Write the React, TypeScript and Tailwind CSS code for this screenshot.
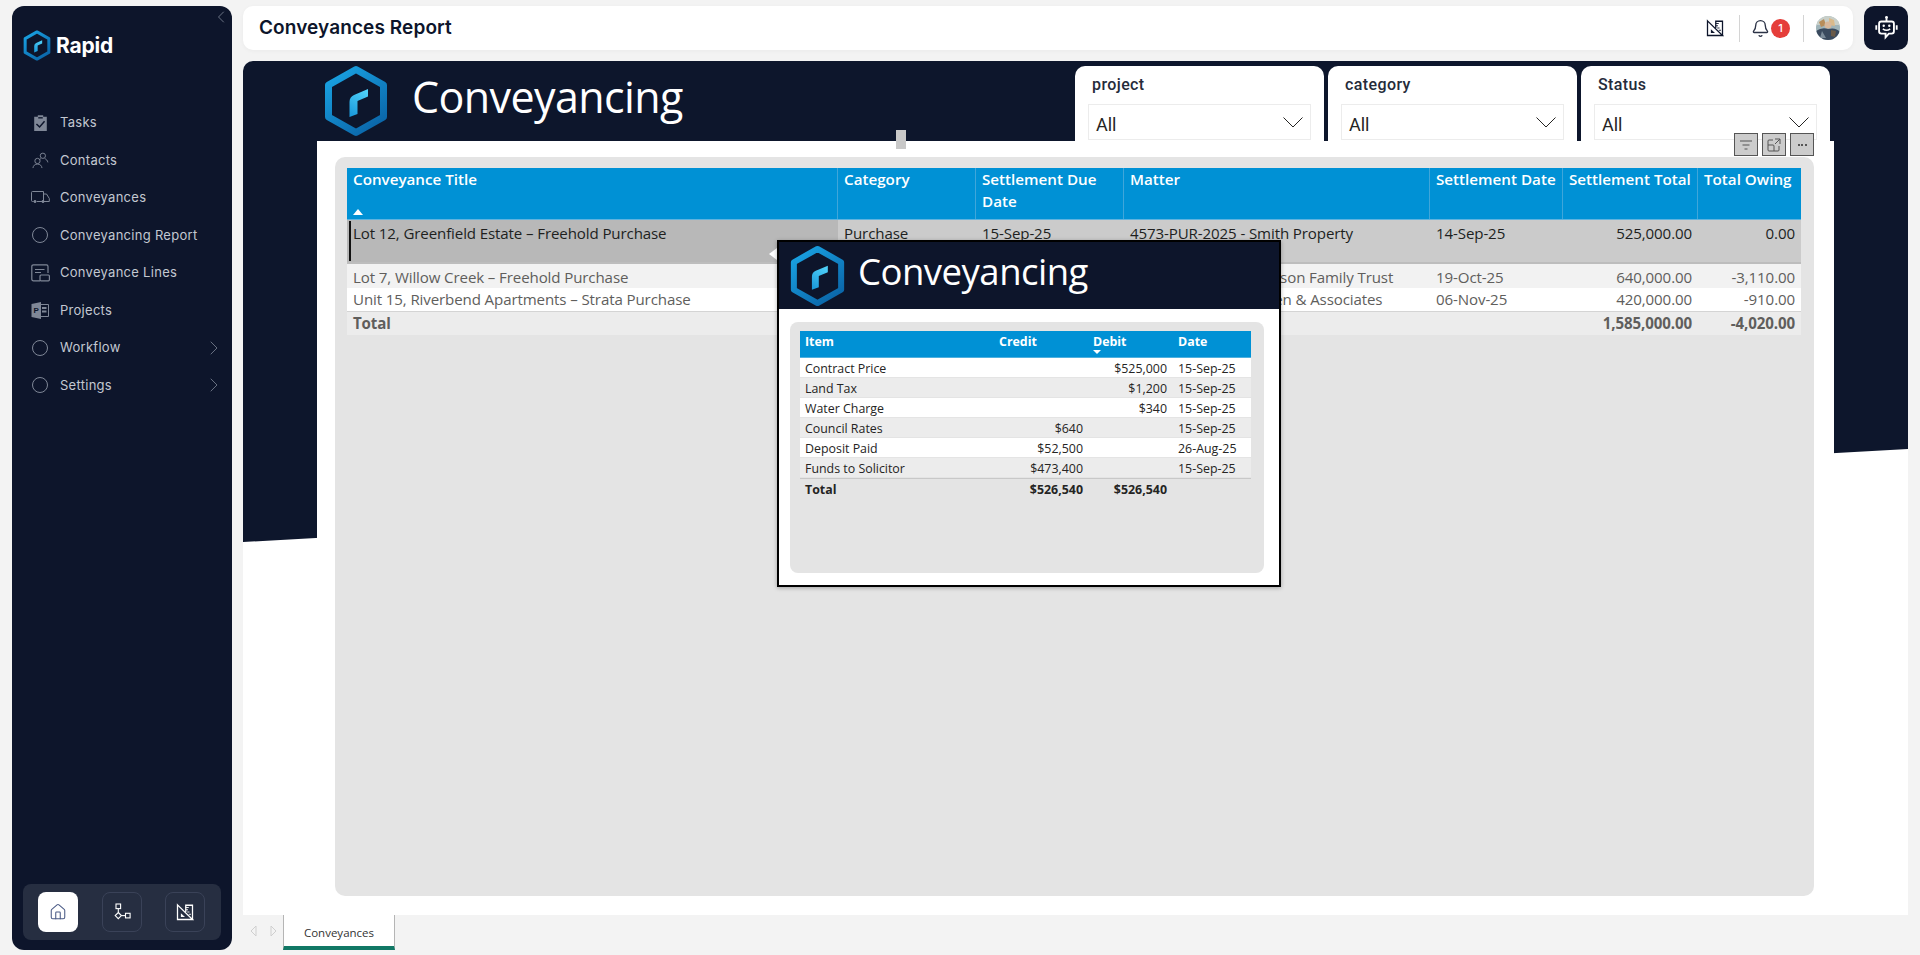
import React from "react";
import { Home, Bell, ChevronLeft, ChevronRight } from "lucide-react";

function Hex({ id, className }: { id: string; className: string }) {
  return (
    <svg viewBox="0 0 64 72" className={className}>
      <defs>
        <linearGradient id={id + "a"} x1="0" y1="0" x2="0.7" y2="1">
          <stop offset="0" stopColor="#1aa6e6" />
          <stop offset="1" stopColor="#0b68ab" />
        </linearGradient>
        <linearGradient id={id + "b"} x1="0.7" y1="0" x2="0.3" y2="1">
          <stop offset="0" stopColor="#4fd0f8" />
          <stop offset="1" stopColor="#1c9bdc" />
        </linearGradient>
      </defs>
      <polygon points="32,4.5 59.5,20 59.5,52 32,67.5 4.5,52 4.5,20" fill="none" stroke={`url(#${id}a)`} strokeWidth="7" strokeLinejoin="round" />
      <path d="M25.5 52 L25.5 37 Q25.5 32 30 30 L44 24 L44 31.5 L33.5 36 L33.5 49 Z" fill={`url(#${id}b)`} />
    </svg>
  );
}

function RulerIcon({ color, size }: { color: string; size: number }) {
  return (
    <svg viewBox="0 0 24 24" width={size} height={size} fill="none" stroke={color} strokeWidth="1.7">
      <path d="M2 2.5 L22 22 H2 Z" />
      <path d="M6.5 13.5 L12 18.8 H6.5 Z" fill={color} stroke="none" />
      <path d="M13 12 V3 H22 V22" />
      <path d="M13 6 H17 M13 9 H16 M15 12 H18 M17 15 H20" strokeWidth="1.2" />
    </svg>
  );
}

const ic = "#7f8797";
function Tasks() {
  return (
    <svg viewBox="0 0 16 20" width="15" height="18">
      <path d="M1 3 H5 V1.5 H11 V3 H15 V19 H1 Z" fill={ic} />
      <path d="M5.5 3.5 H10.5 V5 H5.5 Z" fill="#0d152b" />
      <path d="M3.5 11 L7 14.5 L12.5 8" fill="none" stroke="#0d152b" strokeWidth="1.6" />
    </svg>
  );
}
function Contacts() {
  return (
    <svg viewBox="0 0 18 18" width="17" height="17" fill="none" stroke={ic} strokeWidth="1">
      <circle cx="11.5" cy="4" r="2.8" />
      <path d="M13.5 7 C15 7.5 16.5 9 16.8 11 M8 8 C8.6 7.5 9 7.2 9.5 7" />
      <circle cx="5.8" cy="9.5" r="2.8" />
      <path d="M1 17 C1.3 14.5 3 12.8 5.8 12.8 C8.6 12.8 10.3 14.5 10.6 17" />
    </svg>
  );
}
function Truck() {
  return (
    <svg viewBox="0 0 19 13" width="19" height="13" fill="none" stroke={ic} strokeWidth="1">
      <path d="M2.5 10.5 H1.5 Q0.5 10.5 0.5 9.5 V1.5 Q0.5 0.5 1.5 0.5 H12.5 V10.5 H6" />
      <path d="M12.5 3 H15.5 L18.3 7.5 V10.5 H12.5" />
      <path d="M8 10.5 H11" />
      <circle cx="4" cy="10.5" r="1.1" fill={ic} />
      <circle cx="12" cy="10.5" r="1.1" fill={ic} />
    </svg>
  );
}
function Ring() {
  return <span className="block h-[16px] w-[16px] rounded-full border border-[#7f8797]" />;
}
function LinesIcon() {
  return (
    <svg viewBox="0 0 19 18" width="19" height="18" fill="none" stroke={ic} strokeWidth="1.2">
      <path d="M9 16.8 H2.5 Q0.8 16.8 0.8 15 V2.5 Q0.8 0.8 2.5 0.8 H15.5 Q17 0.8 17 2.5 V9" />
      <path d="M4 5.5 H13.5 M4 8.5 H10" />
      <rect x="9" y="11" width="9.4" height="5.8" rx="1" />
    </svg>
  );
}
function ProjectIcon() {
  return (
    <svg viewBox="0 0 18 17" width="18" height="17">
      <path d="M7 2.5 H17.5 V14.5 H7 Z" fill="none" stroke={ic} strokeWidth="1" />
      <path d="M11 5 H15.5 V7 H11 Z M11 8.5 H15.5 V10.5 H11 Z" fill={ic} />
      <path d="M0.5 2 L10 0 V17 L0.5 15 Z" fill={ic} />
      <text x="2.6" y="11.4" fontSize="8" fontWeight="700" fill="#0d152b" fontFamily="Liberation Sans">P</text>
    </svg>
  );
}
function Flow() {
  return (
    <svg viewBox="0 0 18 18" width="18" height="18" fill="none" stroke="#ffffff" strokeWidth="1.1">
      <rect x="3" y="1" width="4.6" height="4.6" />
      <path d="M5.3 5.6 V9.5" />
      <path d="M5.3 9.5 L8.4 12.6 L5.3 15.7 L2.2 12.6 Z" />
      <path d="M8.4 12.6 H12.5" />
      <rect x="12.5" y="10.3" width="4.6" height="4.6" />
    </svg>
  );
}
function BotIcon() {
  return (
    <svg viewBox="0 0 24 28" width="23" height="26" fill="none" stroke="#ffffff" strokeWidth="2">
      <circle cx="12" cy="2.5" r="1.5" fill="#ffffff" stroke="none" />
      <path d="M12 3 V7" />
      <path d="M6.5 7 H17.5 Q20 7 20 9.5 V17.5 Q20 20 17.5 20 H14.5 L11 24 V20 H6.5 Q4 20 4 17.5 V9.5 Q4 7 6.5 7 Z" />
      <path d="M1 11 V16 M23 11 V16" />
      <circle cx="9" cy="11.5" r="1.3" fill="#ffffff" stroke="none" />
      <circle cx="15" cy="11.5" r="1.3" fill="#ffffff" stroke="none" />
      <path d="M8 15 Q12 18 16 15" strokeWidth="1.6" />
    </svg>
  );
}
function Avatar() {
  return (
    <svg viewBox="0 0 24 24" width="24" height="24" className="rounded-full">
      <rect width="24" height="24" fill="#9fb3b8" />
      <rect x="0" y="0" width="24" height="9" fill="#c8cfc9" />
      <path d="M3 6 L8 3 L10 9 L5 11 Z" fill="#b78d5a" />
      <path d="M13 2 L18 4 L19 10 L13 9 Z" fill="#d9b98a" />
      <circle cx="12" cy="9" r="3.5" fill="#d8b79a" />
      <path d="M0 24 V15 Q6 11 12 13 Q20 11 24 16 V24 Z" fill="#3a4a5e" />
      <path d="M6 15 L10 22 L4 22 Z" fill="#7a8a98" />
      <path d="M15 14 L20 15 L19 21 L15 20 Z" fill="#6a5a48" />
    </svg>
  );
}

const nav = [
  { label: "Tasks", icon: <Tasks /> },
  { label: "Contacts", icon: <Contacts /> },
  { label: "Conveyances", icon: <Truck /> },
  { label: "Conveyancing Report", icon: <Ring /> },
  { label: "Conveyance Lines", icon: <LinesIcon /> },
  { label: "Projects", icon: <ProjectIcon /> },
  { label: "Workflow", icon: <Ring />, more: true },
  { label: "Settings", icon: <Ring />, more: true },
];

function Sidebar() {
  return (
    <aside className="relative flex h-[944px] w-[220px] shrink-0 flex-col rounded-[12px] bg-[#0d152b] font-['Inter',sans-serif]">
      <ChevronLeft size={20} strokeWidth={0.9} color="#8a92a3" className="absolute right-[1px] top-[1px]" />
      <div className="flex items-center gap-[5px] pl-[11px] pt-[24px]">
        <Hex id="s" className="h-[31px] w-[28px]" />
        <span className="text-[21px] font-bold leading-[30px] tracking-[-0.2px] text-white">Rapid</span>
      </div>
      <nav className="mt-[43px] flex flex-col">
        {nav.map((n) => (
          <div key={n.label} className="flex h-[37.5px] items-center text-[#c3c8d1]">
            <span className="flex w-[48px] items-center justify-center pl-[8px]">{n.icon}</span>
            <span className="text-[13px] tracking-[0.28px]">{n.label}</span>
            {n.more && <ChevronRight size={24} strokeWidth={0.8} color="#7f8797" className="ml-auto mr-[6px]" />}
          </div>
        ))}
      </nav>
      <div className="mx-[11px] mb-[10px] mt-auto flex h-[56px] items-center rounded-[8px] bg-[#262e41] pl-[15px]">
        <span className="flex h-[40px] w-[40px] items-center justify-center rounded-[8px] bg-white">
          <Home size={18} strokeWidth={1.4} color="#4a5a85" />
        </span>
        <span className="ml-[24px] flex h-[40px] w-[40px] items-center justify-center rounded-[8px] border border-[#3a4258]">
          <Flow />
        </span>
        <span className="ml-[23px] flex h-[40px] w-[40px] items-center justify-center rounded-[8px] border border-[#3a4258]">
          <RulerIcon color="#ffffff" size={18} />
        </span>
      </div>
    </aside>
  );
}

function Header() {
  return (
    <div className="flex h-[44px] gap-[11px]">
      <header className="flex h-full w-[1610px] items-center rounded-[10px] bg-white pl-[16px] shadow-[0_1px_4px_rgba(0,0,0,0.04)]">
        <h1 className="font-['Inter',sans-serif] text-[19px] font-semibold tracking-[0.1px] text-[#0d152b]">Conveyances Report</h1>
        <div className="ml-auto flex items-center">
          <RulerIcon color="#0d152b" size={18} />
          <span className="ml-[15px] mr-[11px] h-[27px] w-px bg-[#d4d4d4]" />
          <Bell size={19} strokeWidth={1.7} color="#2b3246" />
          <span className="ml-[1px] flex h-[19px] w-[19px] items-center justify-center rounded-full bg-[#e53e3a] font-['Inter',sans-serif] text-[11px] font-medium text-white">1</span>
          <span className="ml-[13px] mr-[12px] h-[27px] w-px bg-[#d4d4d4]" />
          <span className="mr-[13px]"><Avatar /></span>
        </div>
      </header>
      <div className="flex h-[44px] w-[44px] items-center justify-center rounded-[10px] bg-[#0d152b]">
        <BotIcon />
      </div>
    </div>
  );
}

function Slicer({ label, ml }: { label: string; ml: string }) {
  return (
    <div className={`${ml} mt-[5px] h-[90px] w-[249px] shrink-0 rounded-t-[10px] bg-white px-[13px] pt-[8px] font-['Roboto',sans-serif]`}>
      <div className="pl-[4px] text-[16px] font-medium leading-[22px] tracking-[0.4px] text-[#252b3a]">{label}</div>
      <div className="mt-[8px] flex h-[36px] w-[223px] items-center justify-between border border-[#ececec] pl-[7px] pr-[7px] text-[18px] text-[#252423]">
        <span className="pt-[4px]">All</span>
        <svg viewBox="0 0 20 11" width="20" height="11" fill="none" stroke="#252423" strokeWidth="1"><path d="M0.5 0.5 L10 10 L19.5 0.5" /></svg>
      </div>
    </div>
  );
}

const cols = "grid grid-cols-[491px_138px_148px_306px_133px_135px_103px]";
const rows = [
  { t: "Lot 7, Willow Creek – Freehold Purchase", m: "4581-PUR-2025 - Johnson Family Trust", s: "19-Oct-25", v: "640,000.00", o: "-3,110.00", bg: "bg-[#f2f2f2] pt-[2px]", h: "h-[24px]" },
  { t: "Unit 15, Riverbend Apartments – Strata Purchase", m: "4602-PUR-2025 - Green & Associates", s: "06-Nov-25", v: "420,000.00", o: "-910.00", bg: "bg-white", h: "h-[23px]" },
];

function MainTable() {
  const head = ["Conveyance Title", "Category", "Settlement Due Date", "Matter", "Settlement Date", "Settlement Total", "Total Owing"];
  return (
    <div className="w-[1454px] font-['Open_Sans',sans-serif] text-[15.1px] tracking-[-0.12px]">
      <div className={`${cols} h-[52px] border-b border-[#5fb3df] bg-[#0091d5] text-white`}>
        {head.map((h, i) => (
          <div key={h} className={`relative ${i < 6 ? "border-r border-[#3fa6da]" : ""} px-[6px] text-[15.2px] font-semibold leading-[22px] tracking-[0px]`}>
            {h}
            {i === 0 && <span className="absolute bottom-[4px] left-[6px] h-0 w-0 border-x-[5px] border-b-[6px] border-x-transparent border-b-white" />}
          </div>
        ))}
      </div>
      <div className={`${cols} h-[44px] border-b-2 border-[#bdbdbd] bg-[#cbcbcb] leading-[27px] text-[#201f1e]`}>
        <div className="relative bg-[#b8b8b8] pl-[6px]">
          <span className="absolute bottom-[1px] left-[2px] top-[1px] w-[2px] bg-[#111]" />
          Lot 12, Greenfield Estate – Freehold Purchase
        </div>
        <div className="pl-[6px]">Purchase</div>
        <div className="pl-[6px]">15-Sep-25</div>
        <div className="pl-[6px]">4573-PUR-2025 - Smith Property</div>
        <div className="pl-[6px]">14-Sep-25</div>
        <div className="pr-[6px] text-right">525,000.00</div>
        <div className="pr-[6px] text-right">0.00</div>
      </div>
      {rows.map((r) => (
        <div key={r.t} className={`${cols} ${r.h} ${r.bg} items-center text-[#605e5c]`}>
          <div className="pl-[6px]">{r.t}</div>
          <div />
          <div />
          <div className="pl-[6px]">{r.m}</div>
          <div className="pl-[6px]">{r.s}</div>
          <div className="pr-[6px] text-right">{r.v}</div>
          <div className="pr-[6px] text-right">{r.o}</div>
        </div>
      ))}
      <div className={`${cols} h-[24px] items-center border-t border-[#d4d4d4] bg-[#ececec] font-bold text-[#605e5c]`}>
        <div className="pl-[6px]">Total</div>
        <div /><div /><div /><div />
        <div className="pr-[6px] text-right">1,585,000.00</div>
        <div className="pr-[6px] text-right">-4,020.00</div>
      </div>
    </div>
  );
}

const pcols = "grid w-[451px] grid-cols-[194px_93px_85px_79px]";
const prows = [
  ["Contract Price", "", "$525,000", "15-Sep-25"],
  ["Land Tax", "", "$1,200", "15-Sep-25"],
  ["Water Charge", "", "$340", "15-Sep-25"],
  ["Council Rates", "$640", "", "15-Sep-25"],
  ["Deposit Paid", "$52,500", "", "26-Aug-25"],
  ["Funds to Solicitor", "$473,400", "", "15-Sep-25"],
];

function Popup() {
  return (
    <>
      <span className="absolute left-[526px] top-[187px] h-0 w-0 border-y-[6px] border-r-[8px] border-y-transparent border-r-white" />
      <div className="absolute left-[534px] top-[179px] flex h-[347px] w-[504px] flex-col border-2 border-black bg-white font-['Open_Sans',sans-serif] shadow-[0_1px_4px_rgba(0,0,0,0.3)]">
        <div className="flex h-[67px] shrink-0 items-center bg-[#0d152b] pl-[11px] text-white">
          <Hex id="p" className="h-[62px] w-[55px]" />
          <span className="mb-[10px] ml-[13px] text-[36.5px] font-normal leading-[50px] tracking-[-0.5px]">Conveyancing</span>
        </div>
        <div className="mx-[11px] mt-[13px] h-[251px] w-[474px] rounded-[8px] bg-[#e4e4e4] px-[10px] pt-[9px] text-[12.4px] text-[#252423]">
          <div className={`${pcols} h-[27px] border-b border-[#4fb0de] bg-[#0091d5] pt-[1px] font-bold leading-[20px] text-white`}>
            <div className="pl-[5px]">Item</div>
            <div className="pl-[5px]">Credit</div>
            <div className="relative pl-[6px]">
              Debit
              <span className="absolute bottom-[3px] left-[6px] h-0 w-0 border-x-[4px] border-t-[4px] border-x-transparent border-t-white" />
            </div>
            <div className="pl-[6px]">Date</div>
          </div>
          {prows.map((r, i) => (
            <div key={r[0]} className={`${pcols} h-[20px] items-center border-b border-[#e4e4e4] pt-[2px] ${i % 2 ? "bg-[#ececec]" : "bg-white"}`}>
              <div className="pl-[5px]">{r[0]}</div>
              <div className="pr-[4px] text-right">{r[1]}</div>
              <div className="pr-[5px] text-right">{r[2]}</div>
              <div className="pl-[6px]">{r[3]}</div>
            </div>
          ))}
          <div className={`${pcols} h-[20px] items-center border-t border-[#c8c8c8] pt-[2px] font-bold`}>
            <div className="pl-[5px]">Total</div>
            <div className="pr-[4px] text-right">$526,540</div>
            <div className="pr-[5px] text-right">$526,540</div>
            <div />
          </div>
        </div>
      </div>
    </>
  );
}

function Canvas() {
  return (
    <div className="relative h-[854px] overflow-hidden rounded-t-[10px] bg-white">
      <div className="absolute left-0 top-0 h-[481px] w-full bg-[#0d162c] [clip-path:polygon(0_0,100%_0,100%_388px,0_100%)]" />
      <div className="relative flex h-[80px] overflow-hidden">
        <div className="ml-[81px] mt-[4px] flex h-[72px] w-[751px] shrink-0 items-center">
          <Hex id="m" className="h-[72px] w-[64px]" />
          <span className="mb-[8px] ml-[24px] font-['Open_Sans',sans-serif] text-[43px] font-normal leading-[60px] tracking-[-0.6px] text-white">Conveyancing</span>
        </div>
        <Slicer label="project" ml="ml-0" />
        <Slicer label="category" ml="ml-[4px]" />
        <Slicer label="Status" ml="ml-[4px]" />
      </div>
      <div className="relative ml-[74px] h-[774px] w-[1517px] bg-white pl-[18px] pt-[16px]">
        <div className="h-[739px] w-[1479px] rounded-[10px] bg-[#e4e4e4] pl-[12px] pt-[11px]">
          <MainTable />
        </div>
      </div>
      <span className="absolute left-[653px] top-[69px] h-[19px] w-[10px] bg-[#c8c8c8]" />
      <div className="absolute left-[1491px] top-[72px] flex gap-[4px]">
        <span className="flex h-[23px] w-[24px] items-center justify-center border border-[#555] bg-[#cccccc]">
          <svg viewBox="0 0 14 12" width="14" height="12" stroke="#555" strokeWidth="1"><path d="M1 2 H13 M3.5 6 H10.5 M5.5 10 H8.5" /></svg>
        </span>
        <span className="flex h-[23px] w-[24px] items-center justify-center border border-[#555] bg-[#cccccc]">
          <svg viewBox="0 0 14 14" width="14" height="14" fill="none" stroke="#555" strokeWidth="1"><path d="M6 2 H2 Q1 2 1 3 V12 Q1 13 2 13 H11 Q12 13 12 12 V8 M1 7 H6 Q7 7 7 8 V13 M8 1 H13 V6 M13 1 L8 6" /></svg>
        </span>
        <span className="flex h-[23px] w-[24px] items-center justify-center gap-[1.5px] border border-[#555] bg-[#cccccc]">
          <i className="h-[2px] w-[2px] bg-[#555]" /><i className="h-[2px] w-[2px] bg-[#555]" /><i className="h-[2px] w-[2px] bg-[#555]" />
        </span>
      </div>
      <Popup />
    </div>
  );
}

function TabBar() {
  return (
    <div className="flex h-[35px] items-stretch overflow-hidden rounded-b-[10px] bg-[#f3f3f3]">
      <div className="flex w-[40px] items-center justify-center gap-[13px] pb-[3px]">
        <svg viewBox="0 0 7 12" width="7" height="12" fill="none" stroke="#cfcfcf"><path d="M6 1 L1 6 L6 11 Z" /></svg>
        <svg viewBox="0 0 7 12" width="7" height="12" fill="none" stroke="#cfcfcf"><path d="M1 1 L6 6 L1 11 Z" /></svg>
      </div>
      <div className="flex w-[112px] items-center justify-center border-x border-b-[4px] border-x-[#b5b5b5] border-b-[#117865] bg-white pt-[5px] font-['Open_Sans',sans-serif] text-[11.5px] font-medium text-[#333]">
        Conveyances
      </div>
    </div>
  );
}

export default function App() {
  return (
    <div className="flex h-[955px] w-[1920px] gap-[11px] overflow-hidden bg-[#f3f3f3] pl-[12px] pt-[6px]">
      <Sidebar />
      <div className="flex w-[1665px] flex-col gap-[11px]">
        <Header />
        <main>
          <Canvas />
          <TabBar />
        </main>
      </div>
    </div>
  );
}
